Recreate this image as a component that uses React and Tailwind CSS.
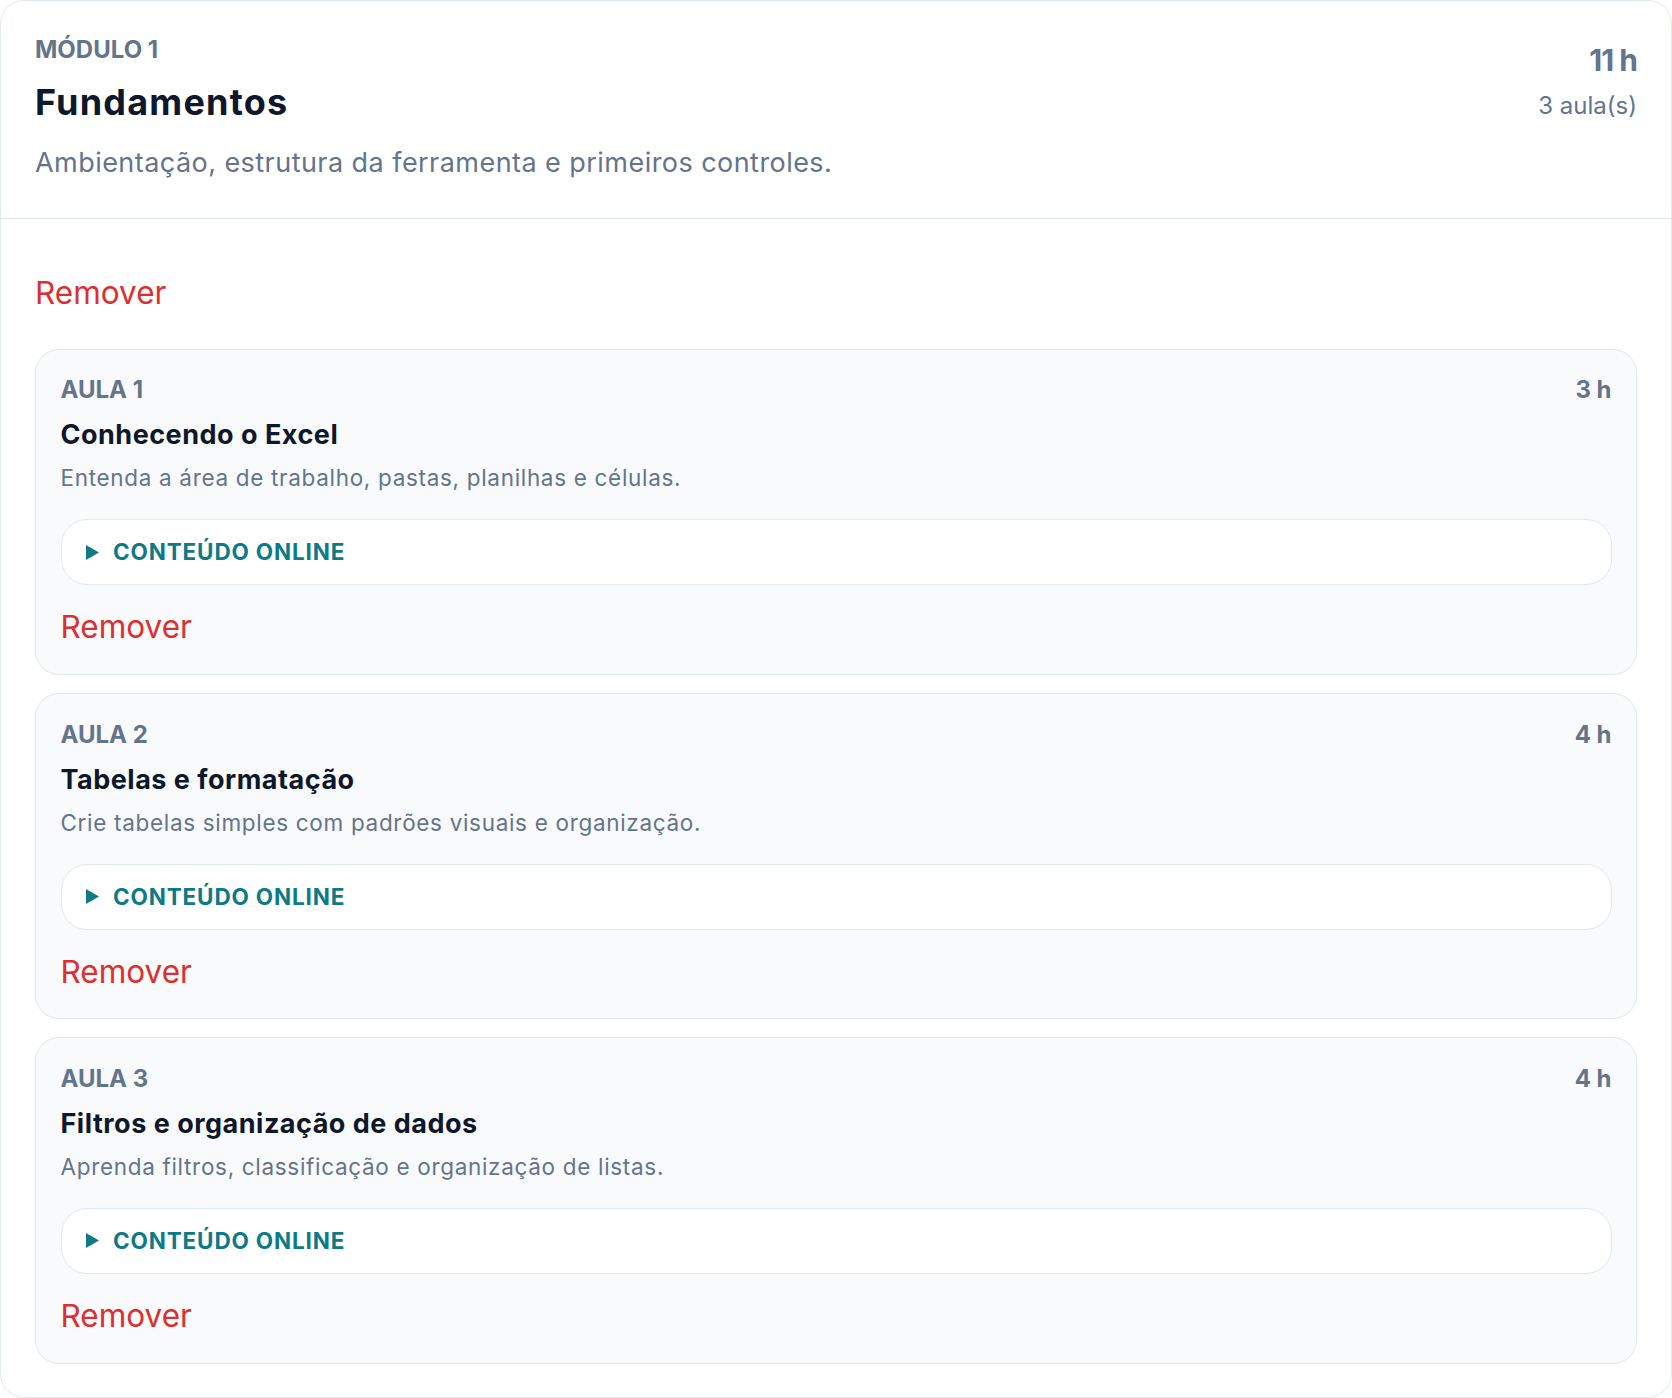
import React from "react"

const aulas = [
    { n: 1, horas: "3 h", titulo: "Conhecendo o Excel", desc: "Entenda a área de trabalho, pastas, planilhas e células." },
    { n: 2, horas: "4 h", titulo: "Tabelas e formatação", desc: "Crie tabelas simples com padrões visuais e organização." },
    { n: 3, horas: "4 h", titulo: "Filtros e organização de dados", desc: "Aprenda filtros, classificação e organização de listas." },
]

const Aula = ({ aula }) => {
    return (
        <div className="rounded-[24px] border border-[#e2e8f0] bg-[#f9fafb] px-[24.5px] pt-[25.5px] pb-[23.5px]">
            <div className="flex items-start justify-between text-[24px] leading-[30px] font-bold text-[#64748b]">
                <p>AULA {aula.n}</p>
                <p>{aula.horas}</p>
            </div>
            <p className="mt-[12px] text-[27px] leading-[36px] font-bold tracking-[0.5px] text-[#0f172a]">{aula.titulo}</p>
            <p className="mt-[8px] text-[22.5px] leading-[34px] tracking-[0.68px] text-[#64748b]">{aula.desc}</p>
            <div className="mt-[24px] flex items-center gap-[14px] rounded-[26px] border border-[#e2e8f0] bg-white px-[24.5px] py-[15px]">
                <svg width="13" height="15" viewBox="0 0 13 15" className="shrink-0">
                    <path d="M0 0 L13 7.5 L0 15 Z" fill="#0e7a85" />
                </svg>
                <span className="text-[22.5px] leading-[34px] font-bold tracking-[0.85px] text-[#0e7a85]">CONTEÚDO ONLINE</span>
            </div>
            <button type="button" className="mt-[18px] block text-[31.5px] leading-[47.25px] text-[#dc2f2f]">Remover</button>
        </div>
    )
}

const App = () => {
    return (
        <div className="h-[1398px] w-[1672px] bg-white" style={{ fontFamily: "Inter, 'Noto Sans', sans-serif" }}>
            <div className="h-full overflow-hidden rounded-[24px] border border-[#e2e8f0] bg-white">
                <div className="flex items-start justify-between border-b border-[#e2e8f0] px-[34px] pt-[37px] pb-[35px]">
                    <div>
                        <p className="text-[24px] leading-[24px] font-bold text-[#64748b]">MÓDULO 1</p>
                        <h2 className="mt-[16px] text-[36px] leading-[48px] font-bold tracking-[1.2px] text-[#0f172a]">Fundamentos</h2>
                        <p className="mt-[17px] text-[27px] leading-[40px] tracking-[0.45px] text-[#64748b]">Ambientação, estrutura da ferramenta e primeiros controles.</p>
                    </div>
                    <div className="text-right">
                        <p className="text-[30px] leading-[45px] font-bold tracking-[-1px] text-[#64748b]">11 h</p>
                        <p className="mt-[5px] text-[24px] leading-[36px] text-[#64748b]">3 aula(s)</p>
                    </div>
                </div>
                <div className="px-[34px] pt-[49.5px]">
                    <button type="button" className="block text-[31.5px] leading-[47.25px] text-[#dc2f2f]">Remover</button>
                    <div className="mt-[33px] flex flex-col gap-[18px]">
                        {aulas.map((a) => (
                            <Aula key={a.n} aula={a} />
                        ))}
                    </div>
                </div>
            </div>
        </div>
    )
}

export default App
